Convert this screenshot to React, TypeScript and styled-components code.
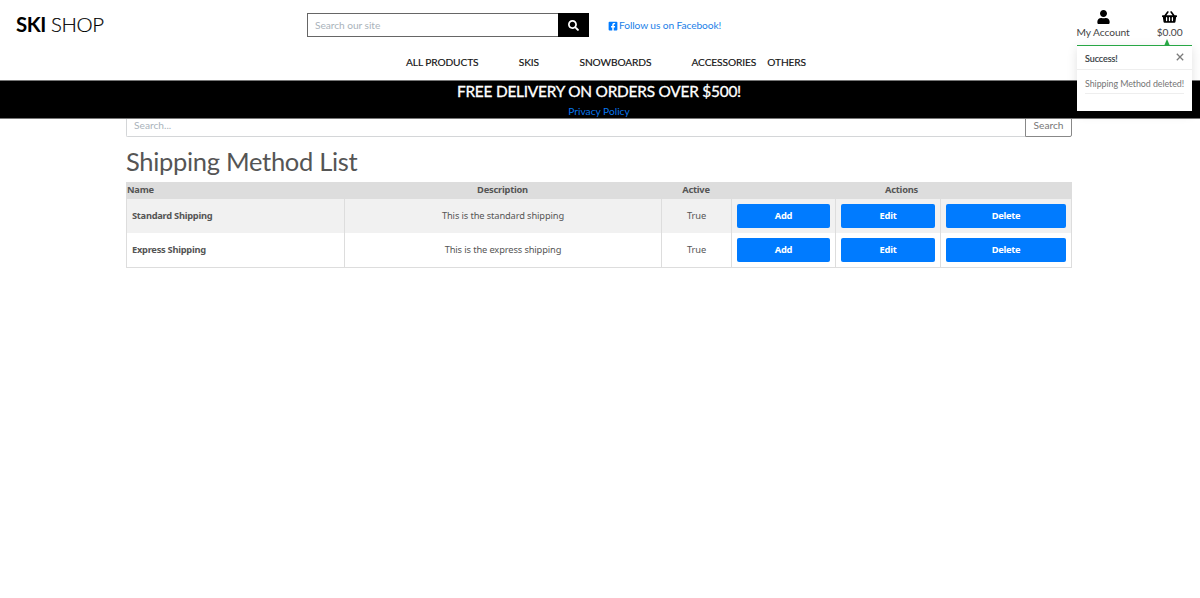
import React from "react";
import styled, { createGlobalStyle } from "styled-components";
import { FaFacebookSquare, FaSearch, FaShoppingBasket, FaUser } from "react-icons/fa";

const Global = createGlobalStyle`
  *, *::before, *::after { box-sizing: border-box; }
  body { margin: 0; background: #fff; color: #555; font: 10.2px/15px Lato, "Liberation Sans", sans-serif; }
  a { color: inherit; text-decoration: none; }
  h1, h2 { margin: 0; font-weight: 400; }
`;

const Header = styled.header`
  position: relative;
  z-index: 2;
  height: 119px;
  background: #fff;
`;

const TopBar = styled.div`
  display: flex;
  height: 50px;
  padding-left: 16px;
`;

const Logo = styled.a`
  width: 291px;
  padding-top: 12px;
  color: #000;
  font-size: 20.4px;
  font-weight: 300;
  line-height: 24px;
  letter-spacing: -0.42px;
  -webkit-text-stroke: 0.2px #000;
  strong { font-weight: 700; -webkit-text-stroke: 0; }
`;

const SiteSearch = styled.form`
  display: flex;
  width: 282px;
  height: 24px;
  margin-top: 13px;
`;

const SiteInput = styled.input`
  flex: 1;
  min-width: 0;
  padding: 0 7px;
  border: 1px solid #666;
  border-right: 0;
  border-radius: 0;
  outline: 0;
  font: 10.2px Lato, sans-serif;
  letter-spacing: -0.05px;
  &::placeholder { color: #aab3bb; opacity: 1; }
`;

const IconButton = styled.button`
  display: flex;
  align-items: center;
  justify-content: center;
  width: 31px;
  padding: 0;
  border: 0;
  background: #000;
  color: #fff;
  font-size: 11px;
`;

const Follow = styled.a`
  display: flex;
  align-items: center;
  gap: 1px;
  height: 15px;
  margin: 18px 0 0 19px;
  color: #1b7fe8;
  letter-spacing: -0.09px;
  white-space: nowrap;
  svg { color: #007bff; font-size: 10px; }
`;

const Account = styled.nav`
  display: flex;
  gap: 27px;
  margin-left: auto;
  padding: 10px 17.5px 0 0;
`;

const AccountLink = styled.a`
  display: flex;
  flex-direction: column;
  align-items: center;
  color: #444;
  svg { display: block; height: 14px; color: #000; }
  span { margin-top: 1px; line-height: 15px; letter-spacing: -0.05px; }
`;

const Menu = styled.nav`
  display: grid;
  grid-template-columns: 112.8px 60.7px 112px 75.8px auto;
  height: 30px;
  padding: 5px 0 0 406px;
  color: #111;
  letter-spacing: -0.11px;
  -webkit-text-stroke: 0.15px #111;
  white-space: nowrap;
`;

const Banner = styled.section`
  height: 39px;
  border: solid #777;
  border-width: 1px 0;
  background: #000;
  color: #fff;
  text-align: center;
  h2 {
    padding: 0 2px 0 0;
    font-size: 15.4px;
    line-height: 21px;
    letter-spacing: -0.22px;
    -webkit-text-stroke: 0.3px #fff;
  }
  a { display: block; margin-top: 2px; padding-right: 2px; line-height: 15px; color: #0877ee; }
`;

const Toast = styled.aside`
  position: absolute;
  top: 45px;
  right: 8px;
  width: 115px;
  height: 66px;
  border-top: 1px solid #28a745;
  background: #fff;
  box-shadow: 0 3px 10px rgba(0, 0, 0, 0.12);
  font-size: 8.9px;
`;

const Arrow = styled.i`
  position: absolute;
  top: -7px;
  right: 22px;
  border: solid transparent;
  border-width: 0 3px 7px;
  border-bottom-color: #28a745;
`;

const ToastHead = styled.div`
  display: flex;
  align-items: center;
  justify-content: space-between;
  height: 24px;
  padding: 1px 8px 0;
  border-bottom: 1px solid #eee;
  color: #343a40;
  strong { font-weight: 400; -webkit-text-stroke: 0.2px #343a40; }
  svg { display: block; margin-top: -3px; }
`;

const ToastText = styled.p`
  width: 99px;
  margin: 6px 8px 0;
  padding-bottom: 2px;
  border-bottom: 1px solid #eee;
  color: #757575;
  letter-spacing: -0.06px;
  white-space: nowrap;
`;

const Main = styled.main`
  width: 946px;
  margin: -6px auto 0 126px;
`;

const ListSearch = styled.form`
  display: flex;
  height: 24px;
`;

const ListInput = styled.input`
  flex: 1;
  min-width: 0;
  padding: 0 7px;
  border: 1px solid #d4d6d8;
  border-right: 0;
  border-radius: 0 0 0 2px;
  outline: 0;
  font: 10.2px Lato, sans-serif;
  &::placeholder { color: #aab3bb; opacity: 1; }
`;

const ListButton = styled.button`
  width: 47px;
  padding: 0 0 1px;
  border: 1px solid #888;
  border-radius: 0 2px 2px 0;
  background: #fff;
  color: #777;
  font: 10.2px Lato, sans-serif;
`;

const Title = styled.h1`
  margin: 9px 0 6px;
  font-size: 25.5px;
  line-height: 30px;
  letter-spacing: -0.3px;
`;

const Table = styled.table`
  width: 946px;
  table-layout: fixed;
  border-collapse: separate;
  border-spacing: 0;
  font-family: "Noto Sans", sans-serif;
  font-size: 9.3px;
  line-height: 14px;
  letter-spacing: -0.12px;
  color: #555;
`;

const HeadCell = styled.th<{ $left?: boolean }>`
  height: 17px;
  padding: 0 1px 1px;
  background: #ddd;
  text-align: ${(p) => (p.$left ? "left" : "center")};
  font-weight: 700;
  letter-spacing: -0.22px;
`;

const Row = styled.tr<{ $striped?: boolean }>`
  height: ${(p) => (p.$striped ? 34 : 35)}px;
  background: ${(p) => (p.$striped ? "#f1f1f1" : "#fff")};
`;

const Cell = styled.td<{ $name?: boolean }>`
  padding: 0 5px;
  border-left: 1px solid #ddd;
  text-align: ${(p) => (p.$name ? "left" : "center")};
  font-weight: ${(p) => (p.$name ? 700 : 400)};
  letter-spacing: ${(p) => (p.$name ? "-0.27px" : "inherit")};
  &:last-child { border-right: 1px solid #ddd; }
  ${Row}:last-child & { border-bottom: 1px solid #ddd; }
`;

const Action = styled.button`
  display: block;
  width: 100%;
  height: 24px;
  padding: 0 0 2px;
  border: 0;
  border-radius: 2px;
  background: #007bff;
  color: #fff;
  font: 700 9.3px "Noto Sans", sans-serif;
  letter-spacing: -0.25px;
`;

const methods = [
  { name: "Standard Shipping", description: "This is the standard shipping" },
  { name: "Express Shipping", description: "This is the express shipping" },
];
const columns = [218, 317, 70, 104, 105, 132];

export default function App() {
  return (
    <>
      <Global />
      <Header>
        <TopBar>
          <Logo><strong>SKI</strong> SHOP</Logo>
          <SiteSearch>
            <SiteInput placeholder="Search our site" />
            <IconButton type="button" aria-label="Search"><FaSearch /></IconButton>
          </SiteSearch>
          <Follow><FaFacebookSquare /><span>Follow us on Facebook!</span></Follow>
          <Account>
            <AccountLink><FaUser size={13} /><span>My Account</span></AccountLink>
            <AccountLink><FaShoppingBasket size={15} /><span>$0.00</span></AccountLink>
          </Account>
        </TopBar>
        <Menu>
          <a>ALL PRODUCTS</a><a>SKIS</a><a>SNOWBOARDS</a><a>ACCESSORIES</a><a>OTHERS</a>
        </Menu>
        <Banner>
          <h2>FREE DELIVERY ON ORDERS OVER $500!</h2>
          <a>Privacy Policy</a>
        </Banner>
        <Toast>
          <Arrow />
          <ToastHead>
            <strong>Success!</strong>
            <svg width="8" height="8" viewBox="0 0 8 8" stroke="#7b7b7b" strokeWidth="1.3">
              <path d="M.8.8l6.4 6.4M7.2.8L.8 7.2" />
            </svg>
          </ToastHead>
          <ToastText>Shipping Method deleted!</ToastText>
        </Toast>
      </Header>
      <Main>
        <ListSearch>
          <ListInput placeholder="Search..." />
          <ListButton type="button">Search</ListButton>
        </ListSearch>
        <Title>Shipping Method List</Title>
        <Table>
          <colgroup>{columns.map((w, i) => <col key={i} style={{ width: w }} />)}</colgroup>
          <thead>
            <tr>
              <HeadCell $left>Name</HeadCell>
              <HeadCell>Description</HeadCell>
              <HeadCell>Active</HeadCell>
              <HeadCell colSpan={3}>Actions</HeadCell>
            </tr>
          </thead>
          <tbody>
            {methods.map((m, i) => (
              <Row key={m.name} $striped={i % 2 === 0}>
                <Cell $name>{m.name}</Cell>
                <Cell>{m.description}</Cell>
                <Cell>True</Cell>
                {["Add", "Edit", "Delete"].map((a) => (
                  <Cell key={a}><Action type="button">{a}</Action></Cell>
                ))}
              </Row>
            ))}
          </tbody>
        </Table>
      </Main>
    </>
  );
}
